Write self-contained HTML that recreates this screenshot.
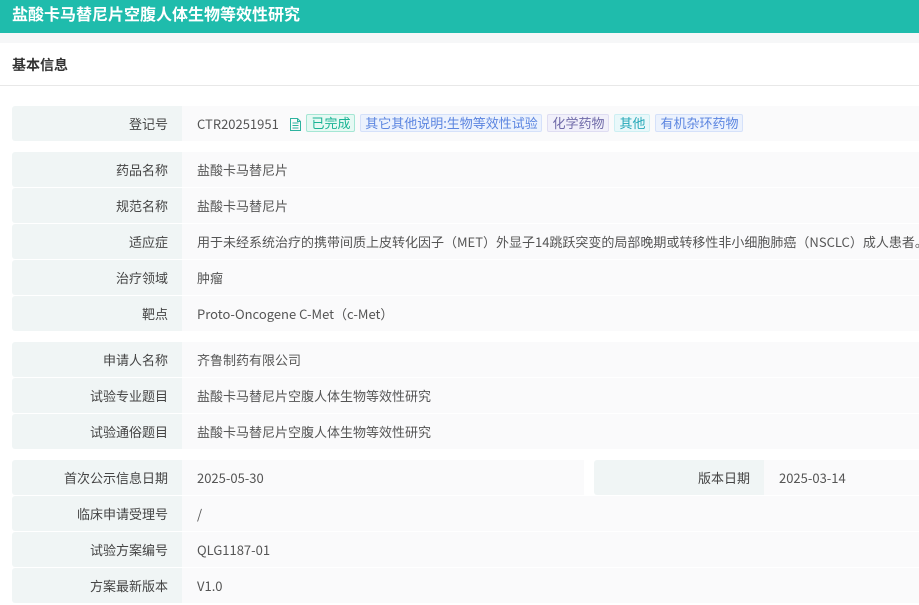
<!DOCTYPE html>
<html><head><meta charset="utf-8">
<style>
*{box-sizing:border-box;margin:0;padding:0}
html,body{width:919px;height:605px;overflow:hidden;background:#fff}
body{position:relative;font-family:"Noto Sans CJK SC","Liberation Sans",sans-serif;font-size:13px;color:#555}
.top{position:absolute;left:0;top:0;width:919px;height:33px;background:#1fbcac;color:#fff;font-size:16px;font-weight:700;line-height:27px;padding-left:12px}
.gap{position:absolute;left:0;top:33px;width:919px;height:10px;background:#f6f7f8}
.sec{position:absolute;left:12px;top:55px;font-size:14px;font-weight:700;color:#333;line-height:20px}
.hr{position:absolute;left:0;top:85px;width:919px;height:1px;background:#e8e8e8}
.l{position:absolute;left:12px;width:170px;height:35px;background:#f0f5f5;color:#444;text-align:right;padding-right:14px;line-height:35px;white-space:nowrap;border-radius:3px 0 0 3px}
.v{position:absolute;left:182px;width:737px;height:35px;background:#fafafb;padding-left:15px;line-height:35px;white-space:nowrap;overflow:hidden}
.t{position:absolute;top:114px;height:18px;line-height:16px;border:1px solid;border-radius:2px;text-align:center;white-space:nowrap;padding-left:1px}
</style></head><body>
<div class="top">盐酸卡马替尼片空腹人体生物等效性研究</div>
<div class="gap"></div>
<div class="sec">基本信息</div>
<div class="hr"></div>

<div class="l" style="top:106px">登记号</div>
<div class="v" style="top:106px">CTR20251951</div>
<svg style="position:absolute;left:290px;top:118px" width="11" height="13" viewBox="0 0 11 13" fill="none" stroke="#2eb39f" stroke-width="1"><path d="M.5.5H7.5L10.500 3.500V12.500H.5Z"/><path d="M7.500.5V3.500H10.500M2.500 5H8.500M2.500 7.500H8.500M2.500 10H8.500"/></svg>
<div class="t" style="left:306px;width:49px;color:#19b394;background:#e6f9f3;border-color:#a5e6d4">已完成</div>
<div class="t" style="left:360px;width:182px;color:#5b85e0;background:#ecf2fd;border-color:#d5e1fa">其它其他说明:生物等效性试验</div>
<div class="t" style="left:547px;width:62px;color:#6f6aa8;background:#f1f0fa;border-color:#dfddf2">化学药物</div>
<div class="t" style="left:614px;width:36px;color:#25a8b8;background:#e9f8fa;border-color:#cdeff3">其他</div>
<div class="t" style="left:655px;width:88px;color:#5b85e0;background:#ecf2fd;border-color:#d5e1fa">有机杂环药物</div>

<div class="l" style="top:152px">药品名称</div><div class="v" style="top:152px">盐酸卡马替尼片</div>
<div class="l" style="top:188px">规范名称</div><div class="v" style="top:188px">盐酸卡马替尼片</div>
<div class="l" style="top:224px">适应症</div><div class="v" style="top:224px">用于未经系统治疗的携带间质上皮转化因子（MET）外显子14跳跃突变的局部晚期或转移性非小细胞肺癌（NSCLC）成人患者。</div>
<div class="l" style="top:260px">治疗领域</div><div class="v" style="top:260px">肿瘤</div>
<div class="l" style="top:296px">靶点</div><div class="v" style="top:296px">Proto-Oncogene C-Met（c-Met）</div>

<div class="l" style="top:342px">申请人名称</div><div class="v" style="top:342px">齐鲁制药有限公司</div>
<div class="l" style="top:378px">试验专业题目</div><div class="v" style="top:378px">盐酸卡马替尼片空腹人体生物等效性研究</div>
<div class="l" style="top:414px">试验通俗题目</div><div class="v" style="top:414px">盐酸卡马替尼片空腹人体生物等效性研究</div>

<div class="l" style="top:460px">首次公示信息日期</div><div class="v" style="top:460px;width:402px">2025-05-30</div>
<div class="l" style="top:460px;left:594px">版本日期</div><div class="v" style="top:460px;left:764px;width:155px">2025-03-14</div>
<div class="l" style="top:496px">临床申请受理号</div><div class="v" style="top:496px">/</div>
<div class="l" style="top:532px">试验方案编号</div><div class="v" style="top:532px">QLG1187-01</div>
<div class="l" style="top:568px">方案最新版本</div><div class="v" style="top:568px">V1.0</div>
</body></html>
